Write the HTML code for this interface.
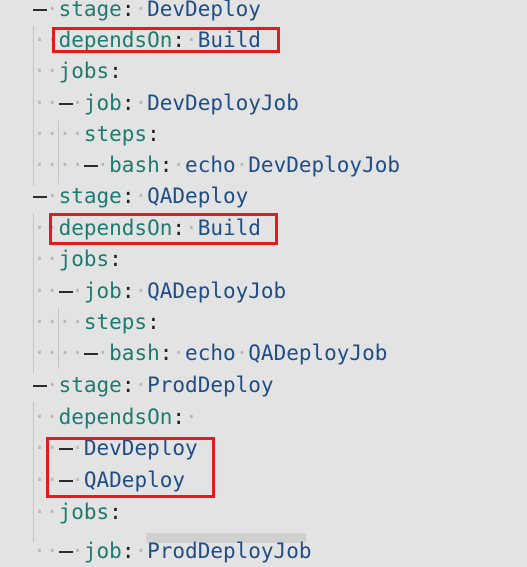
<!DOCTYPE html>
<html><head><style>
body{margin:0;width:527px;height:537px;overflow:hidden;background:#e3e3e3;font-family:"DejaVu Sans Mono","Liberation Mono",monospace;font-size:21px}
.l{position:absolute;left:8px;white-space:pre;line-height:31px;height:31px}
.k{color:#1e7b70}.v{color:#1f4e86}.p{color:#222}.s{color:#b8b8b8}
.d{display:inline-block;width:1ch;position:relative;height:1em;vertical-align:top}
.d::after{content:"";position:absolute;left:0;top:15px;width:14px;height:2px;background:#2a2a2a}
.g{position:absolute;width:1px;background:#c4c4c4}
.box{position:absolute;border:3px solid #e8191c}
</style></head><body>
<div class="g" style="left:33px;top:26px;height:160px"></div>
<div class="g" style="left:58px;top:121px;height:62px"></div>
<div class="g" style="left:33px;top:213px;height:160px"></div>
<div class="g" style="left:58px;top:307px;height:62px"></div>
<div class="g" style="left:33px;top:402px;height:140px"></div>
<div class="l" style="top:-6px"><span class="s">  </span><span class="d"></span><span class="s">·</span><span class="k">stage</span><span class="p">:</span><span class="s">·</span><span class="v">DevDeploy</span></div>
<div class="l" style="top:25px"><span class="s">  ··</span><span class="k">dependsOn</span><span class="p">:</span><span class="s">·</span><span class="v">Build</span></div>
<div class="l" style="top:56px"><span class="s">  ··</span><span class="k">jobs</span><span class="p">:</span></div>
<div class="l" style="top:88px"><span class="s">  ··</span><span class="d"></span><span class="s">·</span><span class="k">job</span><span class="p">:</span><span class="s">·</span><span class="v">DevDeployJob</span></div>
<div class="l" style="top:119px"><span class="s">  ····</span><span class="k">steps</span><span class="p">:</span></div>
<div class="l" style="top:150px"><span class="s">  ····</span><span class="d"></span><span class="s">·</span><span class="k">bash</span><span class="p">:</span><span class="s">·</span><span class="v">echo</span><span class="s">·</span><span class="v">DevDeployJob</span></div>
<div class="l" style="top:181px"><span class="s">  </span><span class="d"></span><span class="s">·</span><span class="k">stage</span><span class="p">:</span><span class="s">·</span><span class="v">QADeploy</span></div>
<div class="l" style="top:213px"><span class="s">  ··</span><span class="k">dependsOn</span><span class="p">:</span><span class="s">·</span><span class="v">Build</span></div>
<div class="l" style="top:244px"><span class="s">  ··</span><span class="k">jobs</span><span class="p">:</span></div>
<div class="l" style="top:276px"><span class="s">  ··</span><span class="d"></span><span class="s">·</span><span class="k">job</span><span class="p">:</span><span class="s">·</span><span class="v">QADeployJob</span></div>
<div class="l" style="top:307px"><span class="s">  ····</span><span class="k">steps</span><span class="p">:</span></div>
<div class="l" style="top:338px"><span class="s">  ····</span><span class="d"></span><span class="s">·</span><span class="k">bash</span><span class="p">:</span><span class="s">·</span><span class="v">echo</span><span class="s">·</span><span class="v">QADeployJob</span></div>
<div class="l" style="top:370px"><span class="s">  </span><span class="d"></span><span class="s">·</span><span class="k">stage</span><span class="p">:</span><span class="s">·</span><span class="v">ProdDeploy</span></div>
<div class="l" style="top:402px"><span class="s">  ··</span><span class="k">dependsOn</span><span class="p">:</span><span class="s">·</span></div>
<div class="l" style="top:433px"><span class="s">  ··</span><span class="d"></span><span class="s">·</span><span class="v">DevDeploy</span></div>
<div class="l" style="top:465px"><span class="s">  ··</span><span class="d"></span><span class="s">·</span><span class="v">QADeploy</span></div>
<div class="l" style="top:497px"><span class="s">  ··</span><span class="k">jobs</span><span class="p">:</span></div>
<div style="position:absolute;left:146px;top:533px;width:160px;height:10px;background:#d0d0d0"></div>
<div class="l" style="top:536px"><span class="s">  ··</span><span class="d"></span><span class="s">·</span><span class="k">job</span><span class="p">:</span><span class="s">·</span><span class="v">ProdDeployJob</span></div>
<div class="box" style="left:52px;top:27px;width:222px;height:20px"></div>
<div class="box" style="left:49px;top:213px;width:223px;height:26px"></div>
<div class="box" style="left:46px;top:437px;width:163px;height:55px"></div>
</body></html>
